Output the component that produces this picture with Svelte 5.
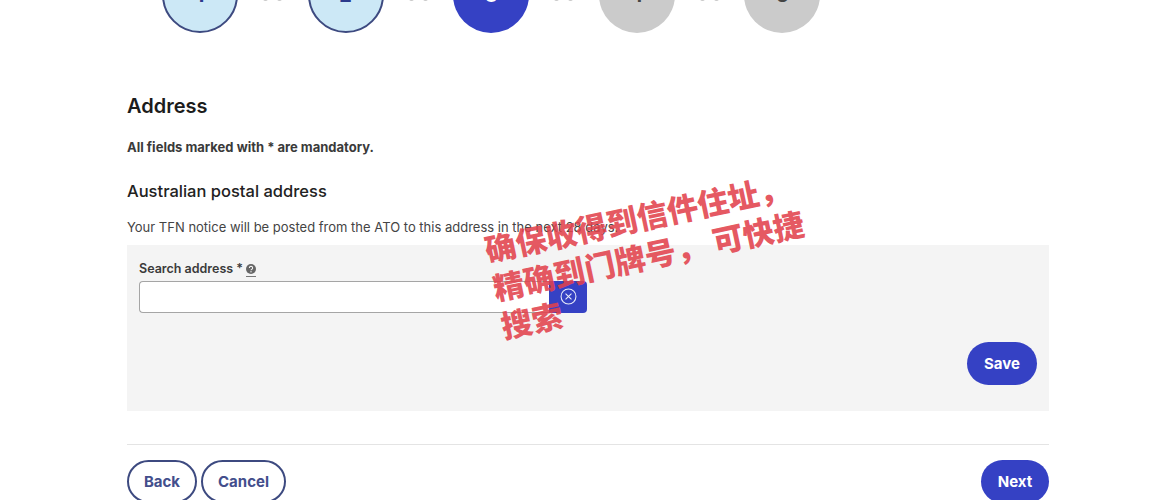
<script>
    const steps = [
        { n: 1, state: 'done' },
        { n: 2, state: 'done' },
        { n: 3, state: 'current' },
        { n: 4, state: 'todo' },
        { n: 5, state: 'todo' },
    ];
</script>

<main>
    <ol class="stepper">
        {#each steps as step, i}
            {#if i > 0}
                <li class="dots" aria-hidden="true"><span></span><span></span></li>
            {/if}
            <li class="step {step.state}">{step.n}</li>
        {/each}
    </ol>

    <h1>Address</h1>
    <p class="mandatory">All fields marked with * are mandatory.</p>
    <h2>Australian postal address</h2>
    <p class="intro">Your TFN notice will be posted from the ATO to this address in the next 28 days.</p>

    <section class="panel">
        <label for="search">
            Search address *
            <span class="help">
                <svg viewBox="0 0 10 10" width="10" height="10">
                    <circle cx="5" cy="5" r="5" fill="#666" />
                    <path d="M3.4 3.9a1.6 1.5 0 1 1 2.4 1.3c-.6.3-.8.5-.8 1" fill="none" stroke="#f4f4f4" stroke-width="1.1" />
                    <circle cx="5" cy="7.7" r=".7" fill="#f4f4f4" />
                </svg>
            </span>
        </label>
        <div class="search-row">
            <input id="search" type="text" />
            <button class="clear" aria-label="Clear">
                <svg viewBox="0 0 16 16" width="17" height="17" fill="none" stroke="#e8ebfa" stroke-width="1">
                    <circle cx="8" cy="8" r="7" />
                    <path d="M5.2 5.2l5.6 5.6M10.8 5.2l-5.6 5.6" />
                </svg>
            </button>
        </div>
        <div class="save-row">
            <button class="primary save">Save</button>
        </div>
    </section>

    <hr />

    <footer>
        <button class="outline back">Back</button>
        <button class="outline cancel">Cancel</button>
        <button class="primary next">Next</button>
    </footer>

    <div class="stamp" lang="zh">
        <div>确保收得到信件住址，</div>
        <div>精确到门牌号， 可快捷</div>
        <div>搜索</div>
    </div>
</main>

<style>
    :global(body) {
        background: #fff;
        overflow: hidden;
    }

    main {
        position: relative;
        box-sizing: border-box;
        width: 1160px;
        height: 500px;
        overflow: hidden;
        padding: 0 111px 0 127px;
        font-family: Inter, 'Liberation Sans', sans-serif;
        color: #333;
    }

    .stepper {
        display: flex;
        align-items: center;
        list-style: none;
        margin: -43px 0 0 35px;
        padding: 0;
    }

    .step {
        box-sizing: border-box;
        width: 76px;
        height: 76px;
        flex: none;
        display: flex;
        align-items: center;
        justify-content: center;
        border-radius: 50%;
        font-size: 20px;
        font-weight: 700;
    }

    .done {
        background: #cce8f6;
        border: 2px solid #3d4a80;
        color: #2b3a8c;
    }

    .current {
        background: #3541c4;
        color: #fff;
    }

    .todo {
        background: #cbcbcb;
        color: #444;
    }

    .dots {
        width: 69.6px;
        flex: none;
        display: flex;
        justify-content: center;
        gap: 9px;
        padding-top: 6px;
    }

    .dots span {
        width: 5px;
        height: 5px;
        border-radius: 50%;
        background: #c9c9c9;
    }

    h1 {
        margin: 60px 0 0;
        font-size: 20px;
        line-height: 26px;
        font-weight: 600;
        color: #1c1c1c;
    }

    .mandatory {
        margin: 18px 0 0;
        font-size: 13px;
        line-height: 20px;
        font-weight: 700;
        color: #3a3a3a;
    }

    h2 {
        margin: 23px 0 0;
        font-size: 16.5px;
        line-height: 22px;
        font-weight: 500;
        color: #222;
    }

    .intro {
        margin: 15px 0 0;
        font-size: 13px;
        line-height: 20px;
        color: #444;
    }

    .panel {
        box-sizing: border-box;
        height: 166px;
        margin-top: 8px;
        padding: 15px 12px 26px;
        background: #f4f4f4;
        display: flex;
        flex-direction: column;
    }

    label {
        display: flex;
        align-items: center;
        gap: 3px;
        height: 17px;
        font-size: 12.5px;
        font-weight: 600;
        color: #3a3a3a;
    }

    .help {
        display: flex;
        padding-bottom: 2px;
        margin-top: 3px;
        border-bottom: 1px solid #777;
    }

    .search-row {
        display: flex;
        margin-top: 4px;
        height: 32px;
    }

    input {
        box-sizing: border-box;
        width: 410px;
        border: 1px solid #a5a5a5;
        border-right: none;
        border-radius: 4px 0 0 4px;
        background: #fff;
        padding: 0 8px;
    }

    .clear {
        width: 38px;
        padding: 0 0 2px;
        border: none;
        border-radius: 0 4px 4px 0;
        background: #3541c4;
        display: flex;
        align-items: center;
        justify-content: center;
    }

    .save-row {
        display: flex;
        justify-content: flex-end;
        margin-top: auto;
    }

    button {
        font-family: inherit;
    }

    .primary,
    .outline {
        height: 43px;
        border-radius: 22px;
        font-size: 15px;
        font-weight: 700;
    }

    .primary {
        border: none;
        background: #3541c4;
        color: #fff;
    }

    .outline {
        border: 2px solid #3d4a80;
        background: #fff;
        color: #434e8c;
    }

    .save {
        width: 70px;
    }

    hr {
        margin: 33px 0 0;
        border: none;
        border-top: 1px solid #e4e4e4;
    }

    footer {
        display: flex;
        gap: 4px;
        margin-top: 15px;
    }

    .back {
        width: 70px;
    }

    .cancel {
        width: 85px;
    }

    .next {
        width: 68px;
        margin-left: auto;
    }

    .stamp {
        position: absolute;
        left: 481px;
        top: 230px;
        transform: rotate(-12deg);
        transform-origin: 0 0;
        white-space: nowrap;
        font-family: 'Noto Sans CJK SC', sans-serif;
        font-size: 31px;
        line-height: 39px;
        font-weight: 900;
        color: rgba(226, 66, 76, 0.88);
    }
</style>
